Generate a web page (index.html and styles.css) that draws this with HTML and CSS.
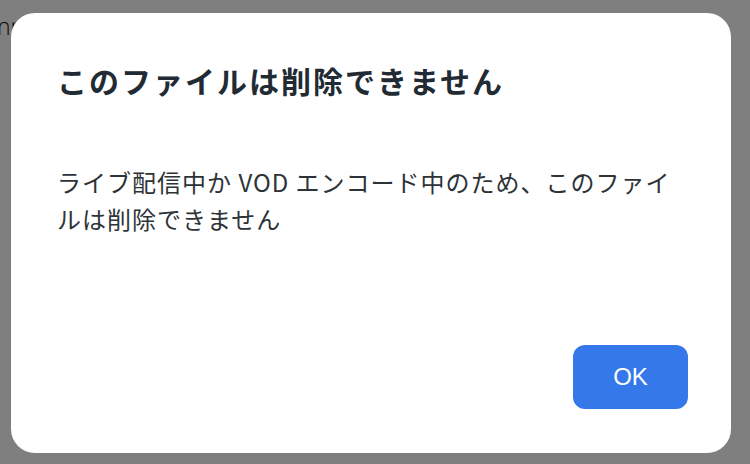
FILE: index.html
```html
<!DOCTYPE html>
<html lang="ja">
<head>
    <meta charset="UTF-8">
    <meta name="viewport" content="width=device-width, initial-scale=1.0">
    <title>削除できません</title>
    <link rel="stylesheet" href="styles.css">
</head>
<body>
    <div class="page">
        <p class="page-text">nn</p>
    </div>

    <div class="overlay">
        <div class="modal" role="dialog">
            <h2 class="modal-title">このファイルは削除できません</h2>
            <p class="modal-body">ライブ配信中か VOD エンコード中のため、このファイルは削除できません</p>
            <div class="modal-footer">
                <button class="btn-ok">OK</button>
            </div>
        </div>
    </div>
</body>
</html>
```

FILE: styles.css
```css
body {
    margin: 0;
    font-family: "Noto Sans CJK JP", "Noto Sans", sans-serif;
    background-color: #fff;
    height: 100vh;
    overflow: hidden;
}

.page {
    padding-top: 10px;
}

.page-text {
    margin: 0 0 0 -3px;
    font-family: "Open Sans", sans-serif;
    font-size: 23px;
    font-weight: 300;
    color: #111;
}

.overlay {
    position: fixed;
    top: 0;
    left: 0;
    right: 0;
    bottom: 0;
    background-color: rgba(0, 0, 0, 0.5);
    padding: 13px 0 0 11px;
}

.modal {
    width: 720px;
    height: 440px;
    box-sizing: border-box;
    background-color: #fff;
    border-radius: 24px;
    padding: 46px 43px 44px 46px;
    display: flex;
    flex-direction: column;
}

.modal-title {
    margin: 0;
    font-size: 30px;
    font-weight: 700;
    line-height: 42px;
    letter-spacing: 2px;
    color: #222a33;
}

.modal-body {
    margin: 62px 0 0;
    font-size: 24px;
    line-height: 37px;
    letter-spacing: 1px;
    color: #2e3338;
    flex: 1;
}

.modal-footer {
    display: flex;
    justify-content: flex-end;
}

.btn-ok {
    width: 115px;
    height: 64px;
    border: none;
    border-radius: 12px;
    background-color: #3578ea;
    color: #fff;
    font-family: "Liberation Sans", Arial, sans-serif;
    font-size: 24px;
    cursor: pointer;
}
```
